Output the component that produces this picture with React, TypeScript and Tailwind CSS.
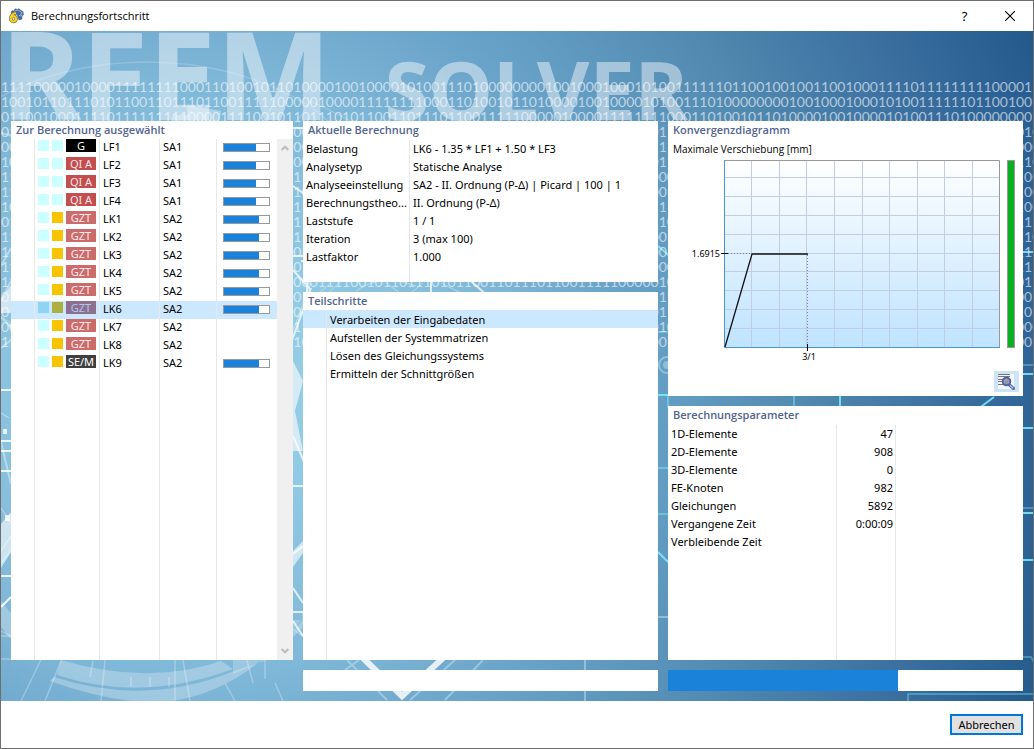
import type { ReactNode } from "react";

const BIT_STREAM =
  "10010110111010110011011101100111110000010000111111110001101001011010000100100001010011101000000001001000100010100111111011001001001100100011110" +
  "1111111110000111";
const BITS_PER_ROW = 129;
const BIT_ROWS = Array.from({ length: 18 }, (_, row) => {
  const start = 30 + row * BITS_PER_ROW;
  return Array.from(
    { length: BITS_PER_ROW },
    (_, i) => BIT_STREAM[(start + i) % BIT_STREAM.length]
  ).join("");
});

type LoadCase = {
  kind: "G" | "QI A" | "GZT" | "SE/M";
  name: string;
  analysis: string;
  progress?: number;
  selected?: boolean;
};

const LOAD_CASES: LoadCase[] = [
  { kind: "G", name: "LF1", analysis: "SA1", progress: 71 },
  { kind: "QI A", name: "LF2", analysis: "SA1", progress: 71 },
  { kind: "QI A", name: "LF3", analysis: "SA1", progress: 71 },
  { kind: "QI A", name: "LF4", analysis: "SA1", progress: 71 },
  { kind: "GZT", name: "LK1", analysis: "SA2", progress: 78 },
  { kind: "GZT", name: "LK2", analysis: "SA2", progress: 78 },
  { kind: "GZT", name: "LK3", analysis: "SA2", progress: 78 },
  { kind: "GZT", name: "LK4", analysis: "SA2", progress: 78 },
  { kind: "GZT", name: "LK5", analysis: "SA2", progress: 78 },
  { kind: "GZT", name: "LK6", analysis: "SA2", progress: 78, selected: true },
  { kind: "GZT", name: "LK7", analysis: "SA2" },
  { kind: "GZT", name: "LK8", analysis: "SA2" },
  { kind: "SE/M", name: "LK9", analysis: "SA2", progress: 78 },
];

const BADGE = {
  G: "bg-black text-white",
  "QI A": "bg-[#c24e50] text-[#fbe3e3]",
  GZT: "bg-[#cc6b6b] text-[#fdeaea]",
  "SE/M": "bg-[#3f3f3f] text-white",
};

const CURRENT: [string, string][] = [
  ["Belastung", "LK6 - 1.35 * LF1 + 1.50 * LF3"],
  ["Analysetyp", "Statische Analyse"],
  ["Analyseeinstellung", "SA2 - II. Ordnung (P-Δ) | Picard | 100 | 1"],
  ["Berechnungstheo...", "II. Ordnung (P-Δ)"],
  ["Laststufe", "1 / 1"],
  ["Iteration", "3 (max 100)"],
  ["Lastfaktor", "1.000"],
];

const STEPS = [
  "Verarbeiten der Eingabedaten",
  "Aufstellen der Systemmatrizen",
  "Lösen des Gleichungssystems",
  "Ermitteln der Schnittgrößen",
];

const PARAMETERS: [string, string][] = [
  ["1D-Elemente", "47"],
  ["2D-Elemente", "908"],
  ["3D-Elemente", "0"],
  ["FE-Knoten", "982"],
  ["Gleichungen", "5892"],
  ["Vergangene Zeit", "0:00:09"],
  ["Verbleibende Zeit", ""],
];

function Panel({ title, className, children }: { title: string; className?: string; children: ReactNode }) {
  return (
    <section className={`flex min-w-0 flex-col bg-white ${className ?? ""}`}>
      <h2 className="h-[18px] shrink-0 pl-[5px] font-['Open_Sans','Noto_Sans',sans-serif] text-[11px] leading-[18px] font-semibold text-[#52648f]">{title}</h2>
      {children}
    </section>
  );
}

function AppIcon() {
  return (
    <svg viewBox="0 0 16 16" className="size-4" aria-hidden="true">
      <path d="M3 5 4 2.800 6 3 7 .8 9.500 1.500 11 .6 12.500 2.200 15 3.500 15.500 6.500 14 8.500 14 11 11 12 9 6.500z" fill="#3f69a8" stroke="#5c6673" strokeWidth=".6" />
      <path d="m6 3.500 4-1.500 4.500 3-2 1 1.500 2-3-.5" fill="none" stroke="#9db9dc" strokeWidth=".9" />
      <path
        d="M8 5.300C5 5 2.800 7.500 2.800 10.700a2.700 2.700 0 1 0 2.700-2.600C4.200 8.100 3 9 2.800 10.700"
        fill="none"
        stroke="#6d6436"
        strokeWidth="3.400"
      />
      <path
        d="M8 5.300C5 5 2.800 7.500 2.800 10.700a2.700 2.700 0 1 0 2.700-2.600C4.200 8.100 3 9 2.800 10.700"
        fill="none"
        stroke="#f6cf2b"
        strokeWidth="2.200"
      />
    </svg>
  );
}

function Backdrop() {
  return (
    <div aria-hidden="true" className="absolute inset-0 overflow-hidden bg-[radial-gradient(circle_at_200px_350px,#98d0e8_0%,#92cbe4_120px,#7fb7d8_300px,#6ca5ca_410px,#649dc4_470px,#5088af_610px,#3c71a1_745px,#2f6497_830px,#1f5487_930px)]">
      <svg viewBox="0 0 1032 670" preserveAspectRatio="xMinYMin slice" className="absolute inset-0 size-full" fill="none">
        <g stroke="#fff" strokeOpacity=".28">
          <ellipse cx="146" cy="176" rx="225" ry="145" strokeWidth="1.500" strokeOpacity=".18" />
          <path d="M264 90l14-30M296 90l14-20 40 20" strokeOpacity=".3" />
          <path d="M0 628h240M24 628l28-54M20 670l34-70M44 670l28-70M0 600l30 16M174 600v70M264 586v62M274 652l8 18M252 652l-14-52M95 600l-4 20M132 600v14M165 600l2 14M92 630l-3 16M130 646v10M149 646v10M168 646v10M182 629l7 41M104 629l-4 41M224 652l10 18M292 598l38 30M318 600l12 28" strokeWidth="1.500" />
          <path d="M110 593v9h40v-9" />
        </g>
        <path d="M186 74l34 6-2 10h-48l2-6h14z" fill="#fff" fillOpacity=".35" />
        <path d="M60 629q88 26 160 1l12 8q-92 34-176 6z" fill="#fff" fillOpacity=".27" />
        <path d="M53 646q92 30 180-6l36-12q12-12 40-38l-8-10v10q-60 70-130 80H130q-40-5-81-20z" fill="#fff" fillOpacity=".27" />
        <path d="M0 570q20 26 40 40l-10 16Q12 612 0 596z" fill="#fff" fillOpacity=".27" />
        <path d="M232 629h32v-40h36q-30 42-68 54z" fill="#fff" fillOpacity=".22" />
        <g stroke="#fff">
          <path d="M0 102l12 3M0 235l10-18M0 317l10-8M0 286l10 10M0 270l10-20M0 411l10 42" strokeOpacity=".4" strokeWidth="2" />
          <path d="M0 359h10M0 440h10M0 420h10M0 410h10M0 545h10M0 576l10-10" strokeWidth="2" strokeOpacity=".85" />
          <path d="M0 382l8 5M0 532l10-12M0 477l10 15M0 520l10-15M0 605h10" strokeOpacity=".5" />
          <path d="M292 155l10 7M292 97h10M292 225h10M292 239l18 20M306 248v16M290 312l20-55M300 230h8M430 250v12M470 250l20 18M292 405l12 28M292 455h10M292 523l10-8M292 557l10 15M292 581h10M292 590l10 15" strokeWidth="2" strokeOpacity=".75" />
          <path d="M292 300l18-48M330 252l-12 10M355 260q25-18 60-5M385 252l14 10M410 262l12-10M440 252l20 10" strokeOpacity=".4" />
        </g>
        <path d="M0 268l10-14v28H0zM0 493l10-12v40l-10 16zM292 330l10 20-8 30 8 40h-10zM292 536l10-14v-12l-10 10z" fill="#fff" fillOpacity=".6" />
        <path d="M0 515l10-12M2 398h4v5H2zM4 484h5v6H4z" fill="#fff" fillOpacity=".8" />
        <path d="M362 627l39 38 41-38" stroke="#fff" strokeOpacity=".82" strokeWidth="6" />
        <path d="M409 669l45-40M444 669l38-40M344 639l14-10M346 629l40 40M584 629v41M657 586h12" stroke="#c9edf4" strokeOpacity=".45" strokeWidth="2" />
        <g stroke="#7df0f7">
          <path d="M657 215l14 12M657 521l14 14M657 364h182v12M993 366l-16 12" strokeWidth="2" strokeOpacity=".85" />
          <path d="M657 301h12M793 365v12M667 365v12M657 437h12M657 483h12" strokeOpacity=".45" strokeWidth="2" />
          <path d="M1020 221h12M1020 343h12M1020 397h12M1020 482h12M1020 529h12" strokeWidth="2" strokeOpacity=".85" />
          <path d="M1020 334h12M1020 477h12M1020 626h10l3 5M907 670v-7h125" strokeOpacity=".35" strokeWidth="2" />
        </g>
        <circle cx="666" cy="334" r="8" stroke="#b6e0ec" strokeOpacity=".55" strokeWidth="2" />
        <circle cx="666" cy="334" r="4" fill="#b6e0ec" fillOpacity=".5" />
      </svg>
      <div className="absolute top-0 left-0 flex w-full items-baseline gap-[53px] font-['Noto_Sans','Open_Sans',sans-serif] leading-[84px] font-bold text-white/45 select-none">
        <span className="text-[122px]">RFEM</span>
        <span className="text-[81px]">SOLVER</span>
      </div>
      <div className="absolute top-[48px] left-0 font-[Lato,sans-serif] text-[14px] leading-[15px] whitespace-nowrap text-white/60 select-none">
        {BIT_ROWS.map((bits, i) => (
          <div key={i}>{bits}</div>
        ))}
      </div>
    </div>
  );
}

function LoadCaseTable() {
  const line = "border-r border-[#e8e8e8] p-0";
  return (
    <div className="flex flex-1">
      <table className="h-full flex-1 table-fixed border-separate border-spacing-0">
        <colgroup>
          <col className="w-[24px]" />
          <col className="w-[65px]" />
          <col className="w-[60px]" />
          <col className="w-[57px]" />
          <col />
        </colgroup>
        <tbody>
          {LOAD_CASES.map((item) => {
            const combo = item.name.startsWith("LK");
            const first = item.selected ? "bg-[#8fd4f4]" : "bg-[#ccffff]";
            const second = !combo ? "bg-[#ccffff]" : item.selected ? "bg-[#adaf43]" : "bg-[#f8c300]";
            const badge = item.selected ? "bg-[#8f6f8f] text-[#a9c9f0]" : BADGE[item.kind];
            return (
              <tr key={item.name} className={`h-[18px] align-top leading-4 ${item.selected ? "bg-[#cce8ff]" : ""}`}>
                <td className={line} />
                <td className={line}>
                  <div className="flex h-[18px] items-start gap-[3px] pl-[3px]">
                    <span className={`mt-px size-[11px] ${first}`} />
                    <span className={`mt-px size-[11px] ${second}`} />
                    <span className={`h-[13px] w-[30px] text-center text-[11px] leading-[13px] whitespace-nowrap ${badge}`}>{item.kind}</span>
                  </div>
                </td>
                <td className={`${line} pl-[3px]`}>{item.name}</td>
                <td className={`${line} pl-[3px]`}>{item.analysis}</td>
                <td className="p-0 pt-1">
                  {item.progress !== undefined && (
                    <div role="progressbar" aria-valuenow={item.progress} aria-label={item.name} className="ml-[6px] h-[9px] w-[47px] border border-[#999] bg-white">
                      <div className="h-full bg-[#1a82d8]" style={{ width: `${item.progress}%` }} />
                    </div>
                  )}
                </td>
              </tr>
            );
          })}
          <tr>
            <td className={line} />
            <td className={line} />
            <td className={line} />
            <td className={line} />
            <td className="p-0" />
          </tr>
        </tbody>
      </table>
      <div className="flex w-4 flex-col justify-between bg-[#f0f0f0]">
        <button type="button" aria-label="Nach oben" className="flex h-[18px] items-center justify-center">
          <svg viewBox="0 0 8 6" className="h-[6px] w-2" fill="none" stroke="#bbb" strokeWidth="2">
            <path d="M.7 5 4 1.700 7.300 5" />
          </svg>
        </button>
        <button type="button" aria-label="Nach unten" className="flex h-[18px] items-center justify-center">
          <svg viewBox="0 0 8 6" className="h-[6px] w-2" fill="none" stroke="#bbb" strokeWidth="2">
            <path d="M.7 1 4 4.300 7.300 1" />
          </svg>
        </button>
      </div>
    </div>
  );
}

function ConvergenceChart() {
  const columns = [83.5, 111.5, 138.5, 166.5, 194.5, 221.5, 249.5, 276.5, 304.5];
  const rows = [20.5, 39.5, 58.5, 77.5, 96.5, 114.5, 133.5, 152.5, 171.5];
  return (
    <svg viewBox="0 0 355 208" className="block w-full" role="img" aria-label="Konvergenzdiagramm">
      <defs>
        <linearGradient id="plot" x1="0" y1="0" x2="0" y2="1">
          <stop offset="0" stopColor="#fff" />
          <stop offset="1" stopColor="#bfe3ff" />
        </linearGradient>
      </defs>
      <rect x="56.5" y="3.5" width="275" height="187" fill="url(#plot)" />
      <g stroke="#c2cce4">
        {columns.map((x) => (
          <path key={x} d={`M${x} 4V190`} />
        ))}
        {rows.map((y) => (
          <path key={y} d={`M57 ${y}H331`} />
        ))}
      </g>
      <path d="M56 3.500H331.500V190" fill="none" stroke="#999" />
      <path d="M56.500 3V190.500H332" fill="none" stroke="#4a97cf" />
      <path d="M60 96.500H84M139.500 98V187" stroke="#7b7bd0" strokeDasharray="1 2" />
      <path d="M57 190 84 97H140" fill="none" stroke="#111" strokeWidth="1.300" />
      <path d="M53 96.500H60M139.500 187V194" stroke="#000" />
      <rect x="339.500" y="3.500" width="7" height="187" fill="#08b022" stroke="#999" />
      <text x="52" y="100" textAnchor="end" fontSize="9">1.6915</text>
      <text x="141" y="203" textAnchor="middle" fontSize="9">3/1</text>
    </svg>
  );
}

function DetailsIcon() {
  return (
    <svg viewBox="0 0 17 17" className="size-[17px]" aria-hidden="true">
      <path d="M0 1h16v15H0z" fill="#f4f8fc" />
      <path d="M0 1.500h12M0 3.500h12M0 6.500h5M0 8.500h4M0 11.500h5" stroke="#777" />
      <path d="m11.500 12 4 3.500" stroke="#5b6cab" strokeWidth="3" strokeLinecap="round" />
      <path d="m12 12.500 3 2.600" stroke="#b9c6ee" strokeWidth="1.200" />
      <circle cx="8.500" cy="8.500" r="3.800" fill="#a9b0be" stroke="#5264a6" strokeWidth="2" />
      <path d="M6.500 8h4M6.500 10h4" stroke="#6b7180" strokeWidth=".8" />
    </svg>
  );
}

export default function App() {
  const line = "border-r border-[#e8e8e8] p-0";
  return (
    <div className="flex min-h-screen flex-col border border-[#6e6e6e] bg-white font-['Noto_Sans','Open_Sans',sans-serif] text-[11px] leading-[18px] text-black">
      <header className="flex h-[30px] shrink-0 items-center pl-[7px]">
        <AppIcon />
        <h1 className="ml-[7px] flex-1 font-['Open_Sans','Noto_Sans',sans-serif] text-[11px]">Berechnungsfortschritt</h1>
        <button type="button" aria-label="Hilfe" className="flex h-full w-[45px] items-center justify-center text-[13px]">?</button>
        <button type="button" aria-label="Schließen" className="flex h-full w-[46px] items-center justify-center">
          <svg viewBox="0 0 10 10" className="size-[10px]" stroke="#000" strokeWidth="1.100">
            <path d="m0 0 10 10M10 0 0 10" />
          </svg>
        </button>
      </header>

      <main className="relative flex flex-1 flex-col">
        <Backdrop />
        <div className="relative grid flex-1 grid-cols-[282px_1fr_1fr] grid-rows-[1fr_21px] gap-[10px] px-[10px] pt-[90px] pb-[10px]">
          <Panel title="Zur Berechnung ausgewählt">
            <LoadCaseTable />
          </Panel>

          <div className="flex min-w-0 flex-col gap-[10px]">
            <Panel title="Aktuelle Berechnung">
              <table className="mt-px w-full table-fixed border-separate border-spacing-0">
                <colgroup>
                  <col className="w-[107px]" />
                  <col />
                </colgroup>
                <tbody>
                  {CURRENT.map(([label, value]) => (
                    <tr key={label} className="h-[18px]">
                      <th scope="row" className={`${line} pl-[3px] text-left font-normal whitespace-nowrap`}>{label}</th>
                      <td className="p-0 pl-[3px] whitespace-nowrap">{value}</td>
                    </tr>
                  ))}
                  <tr className="h-4">
                    <td className={line} />
                    <td className="p-0" />
                  </tr>
                </tbody>
              </table>
            </Panel>
            <Panel title="Teilschritte" className="flex-1">
              <div className="flex flex-1">
                <table className="h-full flex-1 table-fixed border-separate border-spacing-0">
                  <colgroup>
                    <col className="w-[24px]" />
                    <col />
                  </colgroup>
                  <tbody>
                    {STEPS.map((step, i) => (
                      <tr key={step} className={`h-[18px] leading-4 ${i === 0 ? "bg-[#cce8ff]" : ""}`}>
                        <td className={line} />
                        <td className="p-0 pt-[2px] pl-[3px]">{step}</td>
                      </tr>
                    ))}
                    <tr>
                      <td className={line} />
                      <td className="p-0" />
                    </tr>
                  </tbody>
                </table>
              </div>
            </Panel>
          </div>

          <div className="flex min-w-0 flex-col gap-[10px]">
            <Panel title="Konvergenzdiagramm">
              <p className="pt-[2px] pl-[5px] font-['Open_Sans','Noto_Sans',sans-serif] text-[10px] leading-4">Maximale Verschiebung [mm]</p>
              <ConvergenceChart />
              <div className="flex justify-end px-1 pt-[6px] pb-1">
                <button type="button" aria-label="Details anzeigen" className="flex h-[21px] w-[25px] items-center justify-center bg-[#cce4f7]">
                  <DetailsIcon />
                </button>
              </div>
            </Panel>
            <Panel title="Berechnungsparameter" className="flex-1">
              <div className="flex flex-1 pt-px">
                <table className="h-full flex-1 table-fixed border-separate border-spacing-0">
                  <colgroup>
                    <col className="w-[169px]" />
                    <col className="w-[59px]" />
                    <col />
                  </colgroup>
                  <tbody>
                    {PARAMETERS.map(([label, value]) => (
                      <tr key={label} className="h-[18px]">
                        <th scope="row" className={`${line} pl-[3px] text-left font-normal`}>{label}</th>
                        <td className={`${line} pr-[2px] text-right`}>{value}</td>
                        <td className="p-0" />
                      </tr>
                    ))}
                    <tr>
                      <td className={line} />
                      <td className={line} />
                      <td className="p-0" />
                    </tr>
                  </tbody>
                </table>
              </div>
            </Panel>
          </div>

          <div role="progressbar" aria-label="Teilschritt" aria-valuenow={0} className="col-start-2 bg-white" />
          <div role="progressbar" aria-label="Gesamt" aria-valuenow={65} className="bg-white">
            <div className="h-full bg-[#1a82d8]" style={{ width: "64.8%" }} />
          </div>
        </div>
      </main>

      <footer className="flex h-[47px] shrink-0 items-center justify-end px-[10px]">
        <button type="button" className="h-[21px] w-[73px] border-2 border-[#0078d7] bg-[#e1e1e1] text-[11px] leading-[17px]">Abbrechen</button>
      </footer>
    </div>
  );
}
